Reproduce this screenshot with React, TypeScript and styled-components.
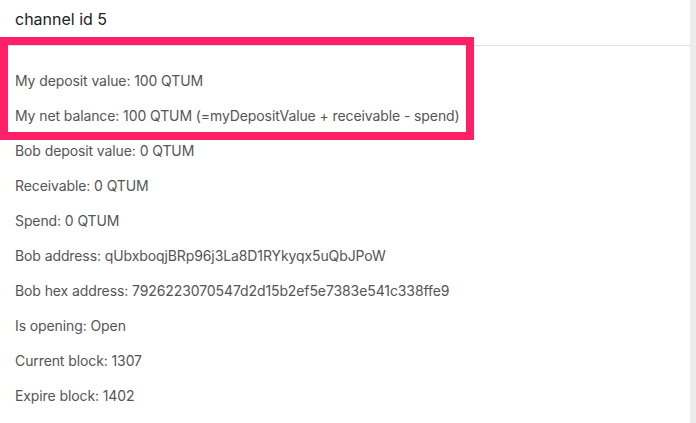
import React from "react";
import styled, { createGlobalStyle } from "styled-components";

const Global = createGlobalStyle`
  html, body { margin: 0; padding: 0; background: #fff; }
  body { font-family: Inter, "Liberation Sans", Arial, sans-serif; overflow: hidden; }
`;

const Page = styled.div`
  display: flex;
  width: 696px;
  height: 423px;
  position: relative;
`;

const Panel = styled.div`
  flex: 1;
  display: flex;
  flex-direction: column;
`;

const Gutter = styled.div`
  width: 6px;
  background: #ececec;
`;

const Header = styled.div`
  height: 46px;
  box-sizing: border-box;
  padding: 8px 15px 0;
  border-bottom: 1px solid #e2e2e2;
  font-size: 16px;
  line-height: 22px;
  color: #222;
`;

const Body = styled.div`
  padding: 17px 15px 0;
  display: flex;
  flex-direction: column;
`;

const Row = styled.div`
  height: 35px;
  display: flex;
  align-items: center;
  font-size: 14px;
  letter-spacing: -0.1px;
  color: #555;
  white-space: nowrap;
`;

const Highlight = styled.div`
  position: absolute;
  left: 0;
  top: 37px;
  width: 474px;
  height: 103px;
  box-sizing: border-box;
  border: 8px solid #ff2068;
  pointer-events: none;
`;

const rows = [
  "My deposit value: 100 QTUM",
  "My net balance: 100 QTUM (=myDepositValue + receivable - spend)",
  "Bob deposit value: 0 QTUM",
  "Receivable: 0 QTUM",
  "Spend: 0 QTUM",
  "Bob address: qUbxboqjBRp96j3La8D1RYkyqx5uQbJPoW",
  "Bob hex address: 7926223070547d2d15b2ef5e7383e541c338ffe9",
  "Is opening: Open",
  "Current block: 1307",
  "Expire block: 1402",
];

export default function App() {
  return (
    <>
      <Global />
      <Page>
        <Panel>
          <Header>channel id 5</Header>
          <Body>
            {rows.map((r) => (
              <Row key={r}>{r}</Row>
            ))}
          </Body>
        </Panel>
        <Gutter />
        <Highlight />
      </Page>
    </>
  );
}
